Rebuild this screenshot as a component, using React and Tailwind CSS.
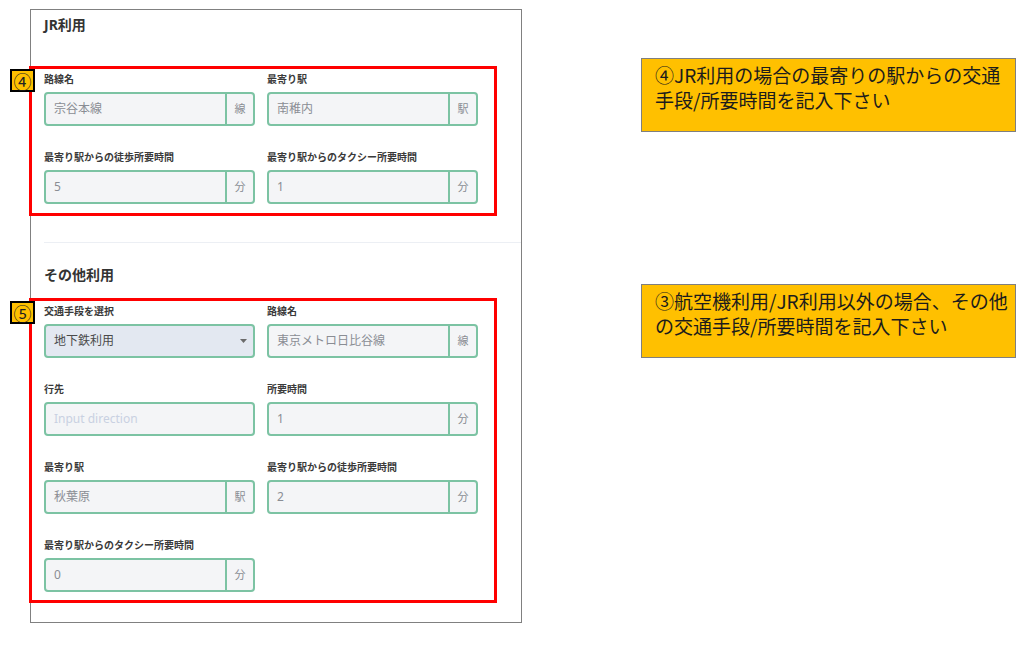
import React from 'react';

const FONT = { fontFamily: '"Noto Sans", "Noto Sans CJK JP", sans-serif' };
const CJK = { fontFamily: '"Noto Sans CJK JP", sans-serif' };

const Label = ({ children }) => (
  <div className="text-[10px] leading-[14px] font-bold text-[#3a3a3a] mb-[6px] whitespace-nowrap">
    {children}
  </div>
);

const Input = ({ value, suffix, placeholder }) => (
  <div className="flex h-[34px] rounded-[4px] border-2 border-[#7cc3a3] bg-[#f4f5f7] overflow-hidden">
    <div className="flex-1 flex items-center pl-[8px] text-[12px]">
      {value !== undefined ? (
        <span className="text-[#8a8d94]">{value}</span>
      ) : (
        <span className="text-[#c9d1e2]">{placeholder}</span>
      )}
    </div>
    {suffix && (
      <div className="w-[28px] shrink-0 flex items-center justify-center border-l-2 border-[#7cc3a3] text-[11px] text-[#8a8d94]">
        {suffix}
      </div>
    )}
  </div>
);

const Select = ({ value }) => (
  <div className="flex items-center h-[34px] rounded-[4px] border-2 border-[#7cc3a3] bg-[#e3e8f1] pl-[8px] pr-[6px]">
    <span className="flex-1 text-[12px] text-[#4a4a4a]">{value}</span>
    <svg width="7" height="4" viewBox="0 0 7 4">
      <path d="M0 0 L7 0 L3.5 4 Z" fill="#6b6b6b" />
    </svg>
  </div>
);

const Field = ({ label, children }) => (
  <div>
    <Label>{label}</Label>
    {children}
  </div>
);

const Badge = ({ children }) => (
  <div
    className="absolute left-[-22px] top-0 w-[25px] h-[23px] border-2 border-black bg-[#ffc000] flex items-center justify-center text-[18px] leading-none text-[#222]"
    style={CJK}
  >
    {children}
  </div>
);

const Note = ({ children }) => (
  <div
    className="w-[375px] h-[74px] border border-[#7f7f7f] bg-[#ffc000] pl-[13px] pt-[3px] text-[19px] leading-[25px] text-[#1c1c1c] whitespace-nowrap"
    style={CJK}
  >
    {children}
  </div>
);

export default function App() {
  return (
    <div className="flex bg-white w-[1024px] h-[652px]" style={FONT}>
      {/* Form panel */}
      <div className="ml-[30px] mt-[9px] w-[492px] h-[614px] border border-[#808080] flex flex-col">
        <div className="pl-[13px] pt-[5px] text-[14px] leading-[20px] font-bold text-[#333] mb-[31px]">
          JR利用
        </div>

        <div className="relative ml-[-2px] w-[468px] border-[3px] border-[#ff0000] pt-[3px] pb-[9px] pl-[12px] pr-[16px]">
          <Badge>④</Badge>
          <div className="grid grid-cols-2 gap-x-[12px] gap-y-[24px]">
            <Field label="路線名"><Input value="宗谷本線" suffix="線" /></Field>
            <Field label="最寄り駅"><Input value="南稚内" suffix="駅" /></Field>
            <Field label="最寄り駅からの徒歩所要時間"><Input value="5" suffix="分" /></Field>
            <Field label="最寄り駅からのタクシー所要時間"><Input value="1" suffix="分" /></Field>
          </div>
        </div>

        <div className="mt-[26px] ml-[13px] h-px bg-[#eceff4]" />

        <div className="pl-[13px] mt-[22px] text-[14px] leading-[20px] font-bold text-[#333] mb-[13px]">
          その他利用
        </div>

        <div className="relative ml-[-2px] w-[468px] border-[3px] border-[#ff0000] pt-[3px] pb-[8px] pl-[12px] pr-[16px]">
          <Badge>⑤</Badge>
          <div className="grid grid-cols-2 gap-x-[12px] gap-y-[24px]">
            <Field label="交通手段を選択"><Select value="地下鉄利用" /></Field>
            <Field label="路線名"><Input value="東京メトロ日比谷線" suffix="線" /></Field>
            <Field label="行先"><Input placeholder="Input direction" /></Field>
            <Field label="所要時間"><Input value="1" suffix="分" /></Field>
            <Field label="最寄り駅"><Input value="秋葉原" suffix="駅" /></Field>
            <Field label="最寄り駅からの徒歩所要時間"><Input value="2" suffix="分" /></Field>
            <Field label="最寄り駅からのタクシー所要時間"><Input value="0" suffix="分" /></Field>
          </div>
        </div>
      </div>

      {/* Annotations */}
      <div className="ml-[119px] mt-[58px] flex flex-col gap-[152px]">
        <Note>
          ④JR利用の場合の最寄りの駅からの交通
          <br />
          手段/所要時間を記入下さい
        </Note>
        <Note>
          ③航空機利用/JR利用以外の場合、その他
          <br />
          の交通手段/所要時間を記入下さい
        </Note>
      </div>
    </div>
  );
}
